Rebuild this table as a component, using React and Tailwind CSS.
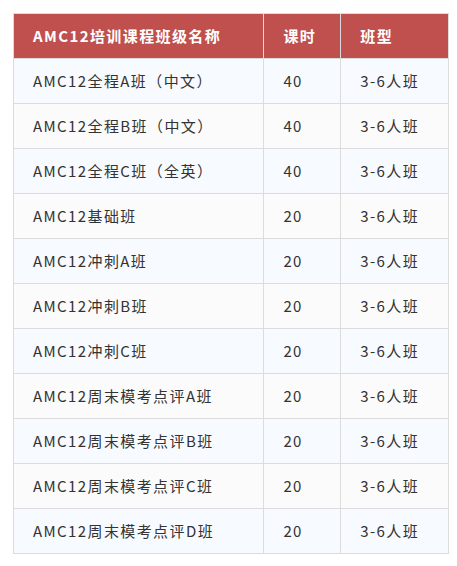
export default function App() {
  const rows = [
    ["AMC12全程A班（中文）", "40"],
    ["AMC12全程B班（中文）", "40"],
    ["AMC12全程C班（全英）", "40"],
    ["AMC12基础班", "20"],
    ["AMC12冲刺A班", "20"],
    ["AMC12冲刺B班", "20"],
    ["AMC12冲刺C班", "20"],
    ["AMC12周末模考点评A班", "20"],
    ["AMC12周末模考点评B班", "20"],
    ["AMC12周末模考点评C班", "20"],
    ["AMC12周末模考点评D班", "20"],
  ];
  return (
    <div className="w-[457px] h-[566px] bg-white pt-[13px] pl-[13px]" style={{ fontFamily: '"Noto Sans CJK SC", "Noto Sans", sans-serif' }}>
      <table className="border-collapse w-[436px] text-[15px] tracking-[1.4px] text-[#333]">
        <colgroup>
          <col className="w-[251px]" />
          <col className="w-[77px]" />
          <col className="w-[108px]" />
        </colgroup>
        <thead>
          <tr className="bg-[#c0504d] text-white h-[45px]">
            <th className="border border-[#dcdcdc] text-left font-bold pl-[19px] py-0">AMC12培训课程班级名称</th>
            <th className="border border-[#dcdcdc] text-left font-bold pl-[19px] py-0">课时</th>
            <th className="border border-[#dcdcdc] text-left font-bold pl-[19px] py-0">班型</th>
          </tr>
        </thead>
        <tbody>
          {rows.map(([name, hours], i) => (
            <tr key={i} className={`h-[45px] ${i % 2 === 0 ? "bg-[#f7fafe]" : "bg-[#fbfbfb]"}`}>
              <td className="border border-[#dcdcdc] pl-[19px] py-0">{name}</td>
              <td className="border border-[#dcdcdc] pl-[19px] py-0">{hours}</td>
              <td className="border border-[#dcdcdc] pl-[19px] py-0">3-6人班</td>
            </tr>
          ))}
        </tbody>
      </table>
    </div>
  );
}
